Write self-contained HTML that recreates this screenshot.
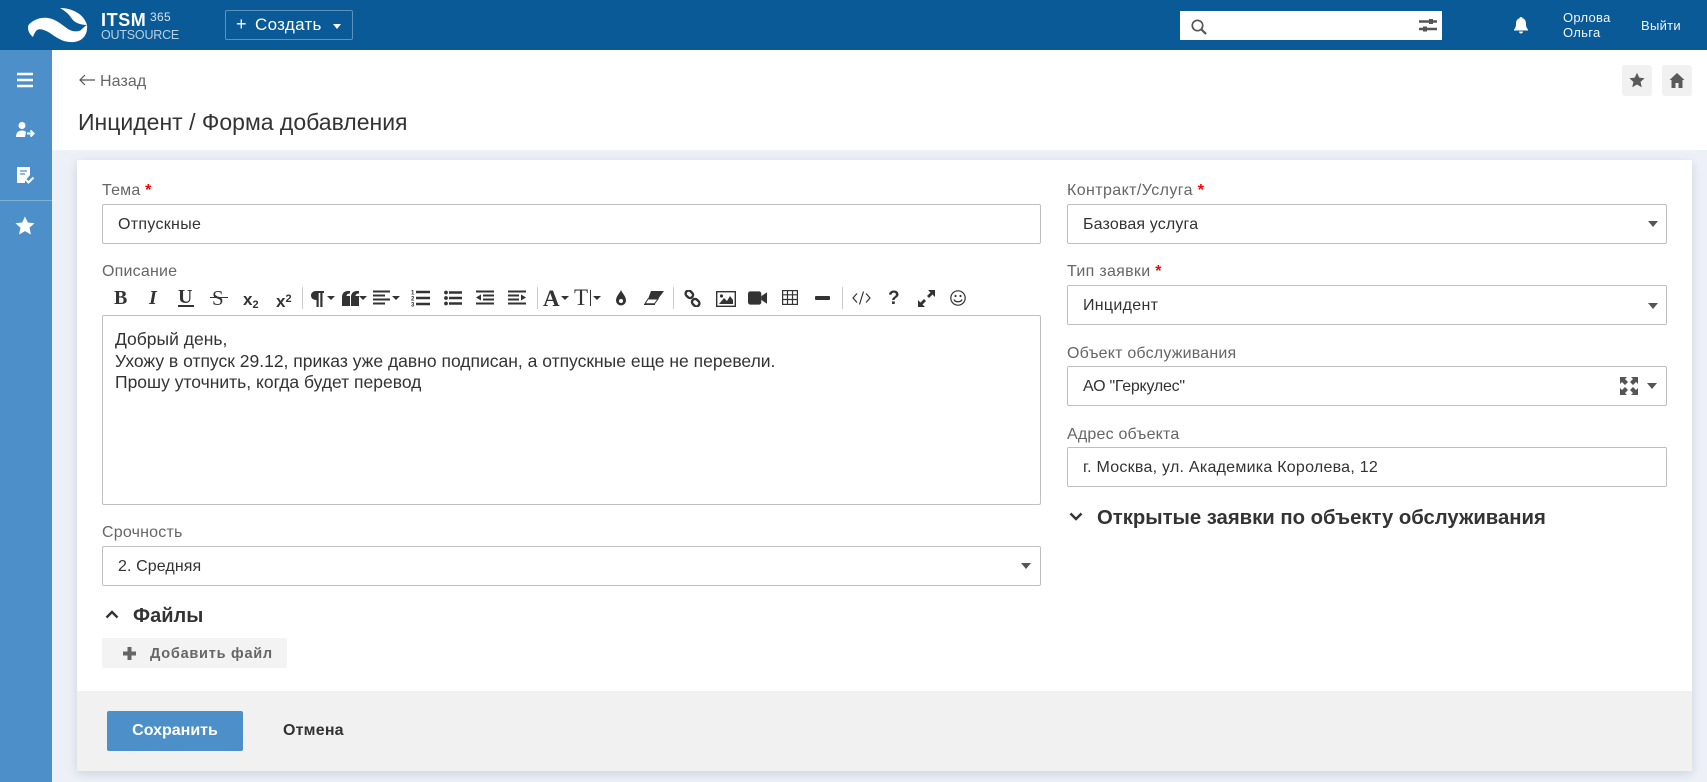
<!DOCTYPE html>
<html lang="ru"><head><meta charset="utf-8"><title>Инцидент</title>
<style>
*{box-sizing:border-box}
html,body{margin:0;padding:0;width:1707px;height:782px;overflow:hidden;background:#edf1f7;font-family:"Liberation Sans",sans-serif;color:#333}
.a{position:absolute;white-space:nowrap}
.lbl{position:absolute;font-size:16px;line-height:20px;color:#666;white-space:nowrap;letter-spacing:.2px}
.lbl b{color:#f00;font-weight:700}
.inp{position:absolute;height:40px;background:#fff;border:1px solid #bfbfbf;border-radius:2px;font-size:16px;line-height:39px;padding-left:15px;color:#333;white-space:nowrap;letter-spacing:.3px}
.car{position:absolute;width:0;height:0;border-left:5px solid transparent;border-right:5px solid transparent;border-top:6px solid #555}
svg{position:absolute;display:block}
.tb{position:absolute;font-family:"Liberation Serif",serif;font-weight:700;color:#333;line-height:24px;white-space:nowrap}
.sep{position:absolute;top:287px;width:1px;height:22px;background:#ccc}
.tc{position:absolute;width:0;height:0;border-left:4.500px solid transparent;border-right:4.500px solid transparent;border-top:4.500px solid #333;top:296px}
</style></head><body>
<div class="a" style="left:0;top:0;width:1707px;height:50px;background:#0a5a97"></div>
<div class="a" style="left:0;top:50px;width:52px;height:732px;background:#4d90c9"></div>
<div class="a" style="left:52px;top:50px;width:1655px;height:100px;background:#fff"></div>
<div class="a" style="left:77px;top:160px;width:1615px;height:611px;background:#fff;box-shadow:0 3px 10px rgba(60,80,110,.18)"></div>
<div class="a" style="left:77px;top:691px;width:1615px;height:80px;background:#f1f1f1"></div>

<!-- logo -->
<svg style="left:0;top:0" width="100" height="50" viewBox="0 0 100 50"><path fill="#fff" d="M28.500 25C33 20 40 17 48 18C56 19 62 25 68 29C73 32 78 32 81 30C83 28 85 26 87 25C88 33 84 41 74 42C64 43 57 38 50 33C45 30 40 28 37 30C35 32 34 34 33 37C29 34 27 29 28.500 25Z"/><path fill="#fff" d="M60 8C72 8 84 14 87 25C81 25 75 23 72 19C69 14 65 11 60 8Z"/></svg>
<div class="a" style="left:101px;top:9px;font-size:18px;line-height:22px;color:#fff;font-weight:700;letter-spacing:.6px">ITSM</div>
<div class="a" style="left:150px;top:10px;font-size:12px;line-height:14px;color:#d5e3ef;letter-spacing:.3px">365</div>
<div class="a" style="left:101px;top:28px;font-size:12.500px;line-height:15px;color:#b9d0e3;letter-spacing:-.2px">OUTSOURCE</div>

<div class="a" style="left:225px;top:10px;width:128px;height:30px;border:1px solid #5b93c0;border-radius:2px"></div>
<div class="a" style="left:236px;top:13px;font-size:18px;line-height:22px;color:#fff">+</div>
<div class="a" style="left:255px;top:15px;font-size:17px;line-height:20px;color:#fff;letter-spacing:.3px">Создать</div>
<div class="car" style="left:333px;top:24px;border-top-color:#fff;border-left-width:4px;border-right-width:4px;border-top-width:5px"></div>

<!-- search -->
<div class="a" style="left:1180px;top:11px;width:262px;height:29px;background:#fff"></div>
<svg style="left:1190px;top:18px" width="18" height="18" viewBox="0 0 18 18"><circle cx="7.500" cy="7.500" r="5.200" fill="none" stroke="#555" stroke-width="1.700"/><path d="M11.500 11.500L16 16" stroke="#555" stroke-width="2.200"/></svg>
<svg style="left:1418px;top:17px" width="20" height="16" viewBox="0 0 20 16"><path d="M1 4.500H19M1 12H19" stroke="#555" stroke-width="2.400"/><rect x="11" y="2" width="4" height="5" fill="#555"/><rect x="5" y="9.500" width="4" height="5" fill="#555"/></svg>
<svg style="left:1514px;top:16px" width="14" height="18" viewBox="0 0 14 18"><path fill="#fff" d="M7 1C8 1 8.500 1.600 8.500 2.300C11 3 12 5 12 8C12 11 13 12.500 14 13.500V14.500H0V13.500C1 12.500 2 11 2 8C2 5 3 3 5.500 2.300C5.500 1.600 6 1 7 1ZM5 15.500H9C9 16.800 8 17.500 7 17.500C6 17.500 5 16.800 5 15.500Z"/></svg>
<div class="a" style="left:1563px;top:11px;font-size:13px;line-height:14.500px;color:#f0f5fa;letter-spacing:.3px">Орлова<br>Ольга</div>
<div class="a" style="left:1641px;top:18px;font-size:13px;line-height:15px;color:#f0f5fa;letter-spacing:.3px">Выйти</div>

<!-- sidebar -->
<svg style="left:16px;top:71px" width="20" height="18" viewBox="0 0 20 18"><path d="M1 3H17M1 9H17M1 15H17" stroke="#fff" stroke-width="2.600"/></svg>
<svg style="left:15px;top:121px" width="20" height="18" viewBox="0 0 20 18"><circle cx="7" cy="4.500" r="3.500" fill="#fff"/><path fill="#fff" d="M1 16C1 11 4 9.500 7 9.500C9 9.500 10 10 11 11L10 16Z"/><path d="M12 12.500H18M15.500 9.500L18.500 12.500L15.500 15.500" fill="none" stroke="#fff" stroke-width="2"/></svg>
<svg style="left:16px;top:166px" width="20" height="20" viewBox="0 0 20 20"><path fill="#fff" d="M1 1H14V9L9 15V17H1Z"/><path d="M4 5H11M4 8H9" stroke="#4d90c9" stroke-width="1.200"/><path d="M10 14L12.500 16.500L17.500 11.500" fill="none" stroke="#fff" stroke-width="2"/></svg>
<div class="a" style="left:0;top:200px;width:52px;height:1px;background:#7fb0d9"></div>
<svg style="left:15px;top:216px" width="20" height="19" viewBox="0 0 20 19"><path fill="#fff" d="M10 .5L12.800 6.500L19.500 7.300L14.500 11.800L15.900 18.500L10 15.100L4.100 18.500L5.500 11.800L.5 7.300L7.200 6.500Z"/></svg>

<!-- head -->
<svg style="left:79px;top:74px" width="17" height="12" viewBox="0 0 17 12"><path d="M1 6H16M6 1L1 6L6 11" fill="none" stroke="#555" stroke-width="1.200"/></svg>
<div class="a" style="left:100px;top:72px;font-size:16px;line-height:20px;color:#666;letter-spacing:.1px">Назад</div>
<div class="a" style="left:78px;top:108px;font-size:23px;line-height:28px;color:#333">Инцидент / Форма добавления</div>
<div class="a" style="left:1622px;top:65px;width:30px;height:31px;background:#f1f1f1;border-radius:3px"></div>
<div class="a" style="left:1662px;top:65px;width:30px;height:31px;background:#f1f1f1;border-radius:3px"></div>
<svg style="left:1629px;top:72px" width="16" height="16" viewBox="0 0 20 19"><path fill="#5a5a5a" d="M10 .5L12.800 6.500L19.500 7.300L14.500 11.800L15.900 18.500L10 15.100L4.100 18.500L5.500 11.800L.5 7.300L7.200 6.500Z"/></svg>
<svg style="left:1669px;top:73px" width="16" height="15" viewBox="0 0 15 15"><path fill="#5a5a5a" d="M7.500 0L15 7H13V15H9V10H6V15H2V7H0Z"/></svg>

<!-- left column -->
<div class="lbl" style="left:102px;top:181px">Тема <b>*</b></div>
<div class="inp" style="left:102px;top:204px;width:939px">Отпускные</div>
<div class="lbl" style="left:102px;top:262px">Описание</div>

<div class="tb" style="left:114px;top:286px;font-size:20px">B</div>
<div class="tb" style="left:149px;top:286px;font-size:20px;font-style:italic">I</div>
<div class="tb" style="left:178px;top:285px;font-size:20px">U</div>
<div class="a" style="left:178px;top:305px;width:16px;height:1.500px;background:#333"></div>
<div class="tb" style="left:212px;top:286px;font-size:21px;font-weight:400">S</div>
<div class="a" style="left:210px;top:297px;width:18px;height:1.200px;background:#333"></div>
<div class="tb" style="left:243px;top:288px;font-family:'Liberation Sans',sans-serif;font-size:17px">x<span style="font-size:11px;vertical-align:-3px">2</span></div>
<div class="tb" style="left:276px;top:287px;font-family:'Liberation Sans',sans-serif;font-size:17px">x<span style="font-size:11px;vertical-align:5px">2</span></div>
<div class="sep" style="left:302px"></div>
<svg style="left:311px;top:291px" width="13" height="16" viewBox="0 0 13 16"><path fill="#333" d="M5 0H13V2H11.500V16H9.300V2H7.700V16H5.500V9C2 9 0 7 0 4.500C0 2 2 0 5 0Z"/></svg>
<div class="tc" style="left:327px"></div>
<svg style="left:342px;top:291px" width="17" height="15" viewBox="0 0 17 15"><path fill="#333" d="M0 6C0 2.500 2 0 6 0H8V2.500C6 2.500 4.500 3.500 4.500 5H8V15H0ZM9 6C9 2.500 11 0 15 0H17V2.500C15 2.500 13.500 3.500 13.500 5H17V15H9Z"/></svg>
<div class="tc" style="left:359px"></div>
<svg style="left:373px;top:290px" width="17" height="16" viewBox="0 0 17 16"><path d="M0 1.500H17M0 5.500H12M0 9.500H17M0 13.500H12" stroke="#333" stroke-width="2"/></svg>
<div class="tc" style="left:392px"></div>
<svg style="left:411px;top:289px" width="19" height="18" viewBox="0 0 19 18"><path d="M5 3H19M5 9H19M5 15H19" stroke="#333" stroke-width="2.400"/><text x="0" y="5.500" font-size="6" font-weight="700" fill="#333" font-family="Liberation Sans">1</text><text x="0" y="11.500" font-size="6" font-weight="700" fill="#333" font-family="Liberation Sans">2</text><text x="0" y="17.500" font-size="6" font-weight="700" fill="#333" font-family="Liberation Sans">3</text></svg>
<svg style="left:444px;top:290px" width="18" height="16" viewBox="0 0 18 16"><path d="M5 2.500H18M5 8H18M5 13.500H18" stroke="#333" stroke-width="2.400"/><circle cx="2" cy="2.500" r="1.900" fill="#333"/><circle cx="2" cy="8" r="1.900" fill="#333"/><circle cx="2" cy="13.500" r="1.900" fill="#333"/></svg>
<svg style="left:476px;top:290px" width="18" height="16" viewBox="0 0 18 16"><path d="M0 1.500H18M7 5.500H18M7 9.500H18M0 13.500H18" stroke="#333" stroke-width="2"/><path d="M5 4.500L0 7.500L5 10.500Z" fill="#333"/></svg>
<svg style="left:508px;top:290px" width="18" height="16" viewBox="0 0 18 16"><path d="M0 1.500H18M0 5.500H11M0 9.500H11M0 13.500H18" stroke="#333" stroke-width="2"/><path d="M13 4.500L18 7.500L13 10.500Z" fill="#333"/></svg>
<div class="sep" style="left:537px"></div>
<div class="tb" style="left:543px;top:287px;font-size:23px;font-weight:700">A</div>
<div class="tc" style="left:561px"></div>
<div class="tb" style="left:574px;top:286px;font-size:23px;font-weight:400">T</div>
<div class="a" style="left:590px;top:290px;width:1px;height:16px;background:#333"></div>
<div class="tc" style="left:593px"></div>
<svg style="left:615px;top:290px" width="12" height="16" viewBox="0 0 12 16"><path fill="#333" fill-rule="evenodd" d="M6 0C7 3 11 6 11 10.500A5 5 0 0 1 1 10.500C1 6 5 3 6 0ZM6 9A2 2 0 0 0 4 11A2 2 0 0 0 8 11A2 2 0 0 0 6 9Z"/></svg>
<svg style="left:644px;top:291px" width="20" height="14" viewBox="0 0 20 14"><path fill="#333" d="M7 0H20L14 8H4Z"/><path fill="#fff" stroke="#333" d="M4 8H14L10.500 12.800H1Z"/><path d="M0 13.500H11" stroke="#333"/></svg>
<div class="sep" style="left:673px"></div>
<svg style="left:684px;top:290px" width="17" height="17" viewBox="0 0 17 17"><g fill="none" stroke="#333" stroke-width="2.400"><rect x="1.300" y="1.300" width="8" height="6" rx="3" transform="rotate(45 5.300 4.300)"/><rect x="7.700" y="9.700" width="8" height="6" rx="3" transform="rotate(45 11.700 12.700)"/></g></svg>
<svg style="left:716px;top:291px" width="20" height="16" viewBox="0 0 20 16"><rect x=".7" y=".7" width="18.600" height="14.600" fill="#fff" stroke="#333" stroke-width="1.400"/><path fill="#333" d="M3 13L8 7L11 10L14 5L17 9V13Z"/><circle cx="5.500" cy="5" r="1.600" fill="#333"/></svg>
<svg style="left:748px;top:291px" width="19" height="14" viewBox="0 0 20 14"><rect x="0" y="0" width="14" height="14" rx="2.500" fill="#333"/><path fill="#333" d="M14 5L20 1V13L14 9Z"/></svg>
<svg style="left:782px;top:290px" width="16" height="15" viewBox="0 0 16 15"><rect x=".6" y=".6" width="14.800" height="13.800" fill="#fff" stroke="#333" stroke-width="1.200"/><path d="M1 4.800H15M1 9.500H15M5.500 1V14M10.500 1V14" stroke="#333" stroke-width="1.200"/></svg>
<div class="a" style="left:815px;top:296px;width:15px;height:4px;background:#333;border-radius:1px"></div>
<div class="sep" style="left:842px"></div>
<svg style="left:852px;top:290px" width="19" height="16" viewBox="0 0 19 16"><path d="M5 3.500L1 8L5 12.500M14 3.500L18 8L14 12.500M11.500 1.500L7.500 14.500" fill="none" stroke="#333" stroke-width="1.200"/></svg>
<div class="a" style="left:888px;top:288px;font-size:19px;line-height:22px;font-weight:700;color:#333">?</div>
<svg style="left:918px;top:290px" width="17" height="17" viewBox="0 0 17 17"><path fill="#333" d="M10 0H17V7L14.500 4.500L11 8L9 6L12.500 2.500ZM7 17H0V10L2.500 12.500L6 9L8 11L4.500 14.500Z"/></svg>
<svg style="left:950px;top:290px" width="16" height="16" viewBox="0 0 16 16"><circle cx="8" cy="8" r="7.200" fill="none" stroke="#333" stroke-width="1.200"/><circle cx="5.500" cy="6" r="1.100" fill="#333"/><circle cx="10.500" cy="6" r="1.100" fill="#333"/><path d="M4 9.500C5 12.500 11 12.500 12 9.500" fill="none" stroke="#333" stroke-width="1.200"/></svg>

<div class="a" style="left:102px;top:315px;width:939px;height:190px;background:#fff;border:1px solid #bfbfbf;border-radius:2px"></div>
<div class="a" style="left:115px;top:329px;font-size:17.500px;line-height:21.500px;color:#333">Добрый день,<br>Ухожу в отпуск 29.12, приказ уже давно подписан, а отпускные еще не перевели.<br>Прошу уточнить, когда будет перевод</div>

<div class="lbl" style="left:102px;top:523px">Срочность</div>
<div class="inp" style="left:102px;top:546px;width:939px;letter-spacing:.1px">2. Средняя</div>
<div class="car" style="left:1021px;top:563px"></div>

<svg style="left:105px;top:610px" width="14" height="9" viewBox="0 0 14 9"><path d="M1.500 7.500L7 2L12.500 7.500" fill="none" stroke="#333" stroke-width="2.400"/></svg>
<div class="a" style="left:133px;top:604px;font-size:20px;line-height:24px;font-weight:700;color:#333">Файлы</div>
<div class="a" style="left:102px;top:638px;width:185px;height:30px;background:#f3f3f3;border-radius:2px"></div>
<svg style="left:122px;top:646px" width="15" height="15" viewBox="0 0 15 15"><path d="M7.500 1V14M1 7.500H14" stroke="#666" stroke-width="4"/></svg>
<div class="a" style="left:150px;top:645px;font-size:14.500px;line-height:18px;font-weight:700;color:#666;letter-spacing:.75px">Добавить файл</div>

<div class="a" style="left:107px;top:711px;width:136px;height:40px;background:#4d90c9;border-radius:2px;color:#fff;font-size:16px;font-weight:700;line-height:40px;text-align:center">Сохранить</div>
<div class="a" style="left:283px;top:721px;font-size:16px;line-height:20px;font-weight:700;color:#333;letter-spacing:.2px">Отмена</div>

<!-- right column -->
<div class="lbl" style="left:1067px;top:181px;letter-spacing:.4px">Контракт/Услуга <b>*</b></div>
<div class="inp" style="left:1067px;top:204px;width:600px;letter-spacing:.15px">Базовая услуга</div>
<div class="car" style="left:1648px;top:221px"></div>
<div class="lbl" style="left:1067px;top:262px;letter-spacing:.3px">Тип заявки <b>*</b></div>
<div class="inp" style="left:1067px;top:285px;width:600px">Инцидент</div>
<div class="car" style="left:1648px;top:303px"></div>
<div class="lbl" style="left:1067px;top:344px">Объект обслуживания</div>
<div class="inp" style="left:1067px;top:366px;width:600px;line-height:40px;letter-spacing:-.25px">АО "Геркулес"</div>
<svg style="left:1620px;top:377px" width="18" height="18" viewBox="0 0 18 18"><path fill="#555" d="M0 0H7L5 2L8 5L5 8L2 5L0 7ZM18 0H11L13 2L10 5L13 8L16 5L18 7ZM0 18H7L5 16L8 13L5 10L2 13L0 11ZM18 18H11L13 16L10 13L13 10L16 13L18 11Z"/></svg>
<div class="car" style="left:1647px;top:383px"></div>
<div class="lbl" style="left:1067px;top:425px">Адрес объекта</div>
<div class="inp" style="left:1067px;top:447px;width:600px;line-height:40px;letter-spacing:.25px">г. Москва, ул. Академика Королева, 12</div>
<svg style="left:1069px;top:512px" width="14" height="9" viewBox="0 0 14 9"><path d="M1.500 1.500L7 7L12.500 1.500" fill="none" stroke="#333" stroke-width="2.400"/></svg>
<div class="a" style="left:1097px;top:505px;font-size:20.300px;line-height:26px;font-weight:700;color:#333">Открытые заявки по объекту обслуживания</div>
</body></html>
